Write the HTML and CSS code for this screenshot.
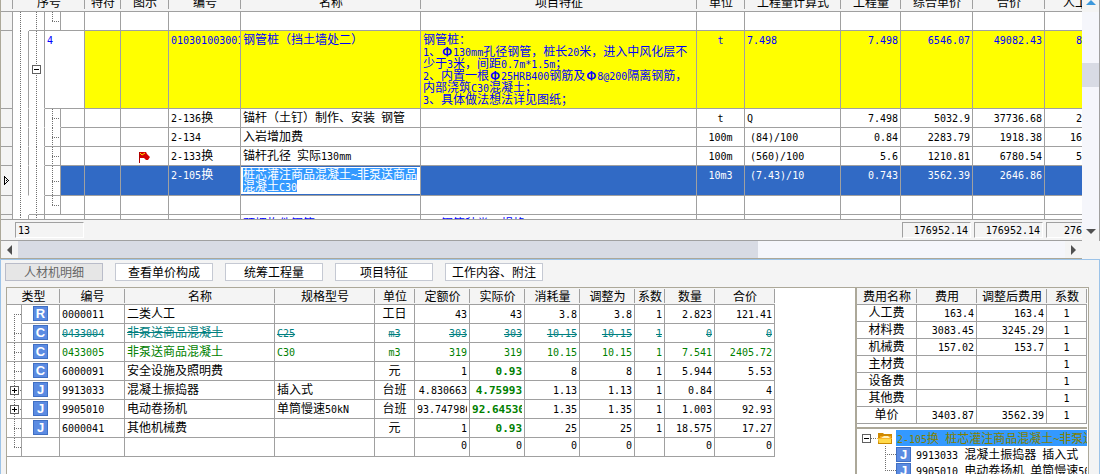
FILE: index.html
```html
<!DOCTYPE html>
<html lang="zh-CN">
<head>
<meta charset="utf-8">
<title>清单计价</title>
<link rel="stylesheet" href="styles.css">
</head>
<body>
<main class="app">
<section class="top">
  <div class="top-main">
    <div class="viewport">
      <table class="grid bill">
        <colgroup><col class="w12"><col class="w16"><col class="w16"><col class="w16"><col class="w24"><col class="w36"><col class="w48"><col class="w72"><col class="w180"><col><col class="w48"><col class="w96"><col class="w60"><col class="w72"><col class="w72"><col class="w38"></colgroup>
        <thead>
          <tr><th></th><th colspan="4">序号</th><th>特符</th><th>图示</th><th>编号</th><th>名称</th><th>项目特征</th><th>单位</th><th>工程量计算式</th><th>工程量</th><th>综合单价</th><th>合价</th><th class="cut-head">人工</th></tr>
        </thead>
        <tbody>
          <tr><td class="gut"></td><td class="t line open nor"></td><td class="t line"></td><td class="t end"></td><td></td><td></td><td></td><td></td><td></td><td></td><td></td><td></td><td></td><td></td><td></td><td></td></tr>
          <tr class="item"><td class="gut"></td><td class="t line open"></td><td class="t line open"><button class="box mid" aria-label="折叠"></button></td><td class="white n" colspan="2">4</td><td></td><td></td><td class="n">010301003001</td><td>钢管桩（挡土墙处二）</td>
            <td>钢管桩：<br><span class="n">1</span>、<span class="phi">Φ</span><span class="n">130mm</span>孔径钢管，桩长<span class="n">20</span>米，进入中风化层不<br>少于<span class="n">3</span>米，间距<span class="n">0.7m*1.5m</span>；<br><span class="n">2</span>、内置一根<span class="phi">Φ</span><span class="n">25HRB400</span>钢筋及<span class="phi">Φ</span><span class="n">8@200</span>隔离钢筋，<br>内部浇筑<span class="n">C30</span>混凝土；<br><span class="n">3</span>、具体做法想法详见图纸；</td>
            <td class="n c">t</td><td class="n">7.498</td><td class="n r">7.498</td><td class="n r">6546.07</td><td class="n r">49082.43</td><td class="n r cut">8</td></tr>
          <tr><td class="gut"></td><td class="t line open"></td><td class="t line open"></td><td class="t branch open"></td><td></td><td></td><td></td><td><span class="n">2-136</span>换</td><td>锚杆（土钉）制作、安装<span class="n"> </span>钢管</td><td></td><td class="n c">t</td><td class="n">Q</td><td class="n r">7.498</td><td class="n r">5032.9</td><td class="n r">37736.68</td><td class="n r cut">2</td></tr>
          <tr><td class="gut"></td><td class="t line open"></td><td class="t line open"></td><td class="t branch"></td><td></td><td></td><td></td><td class="n">2-134</td><td>入岩增加费</td><td></td><td class="n c">100m</td><td class="n expr">(84)/100</td><td class="n r">0.84</td><td class="n r">2283.79</td><td class="n r">1918.38</td><td class="n r cut">16</td></tr>
          <tr><td class="gut"></td><td class="t line open"></td><td class="t line open"></td><td class="t branch"></td><td></td><td></td>
            <td class="c mark-cell"><svg class="flag" viewBox="0 0 12 11" role="img" aria-label="标记"><path d="M0 0h1v11H0z" fill="#b00000"/><path d="M1 0h6l1 2 3 3-2 3H7L5 6H1z" fill="#d40000"/><path d="M1 1l2 2 3-2" stroke="#ffd800" fill="none"/></svg></td>
            <td><span class="n">2-133</span>换</td><td>锚杆孔径<span class="n"> </span>实际<span class="n">130mm</span></td><td></td><td class="n c">100m</td><td class="n expr">(560)/100</td><td class="n r">5.6</td><td class="n r">1210.81</td><td class="n r">6780.54</td><td class="n r cut">5</td></tr>
          <tr class="sel"><td class="gut"><svg class="cursor" viewBox="0 0 6 9" aria-hidden="true"><path d="M1 0h1v9H1zM2 1h1v1H2zM3 2h1v1H3zM4 3h1v1H4zM5 4h1v1H5zM4 5h1v1H4zM3 6h1v1H3zM2 7h1v1H2zM3 4h1v1H3z"/></svg></td><td class="t line open"></td><td class="t line open"></td><td class="t branch"></td><td></td><td></td><td></td><td><span class="n">2-105</span>换</td>
            <td class="editing"><div class="editor" contenteditable="true" role="textbox" aria-label="名称"><mark>桩芯灌注商品混凝土<span class="n">~</span>非泵送商品</mark><mark>混凝土<span class="n">C30</span></mark></div></td>
            <td></td><td class="n c">10m3</td><td class="n expr">(7.43)/10</td><td class="n r">0.743</td><td class="n r">3562.39</td><td class="n r">2646.86</td><td></td></tr>
          <tr><td class="gut"></td><td class="t line open nor"></td><td class="t line"></td><td class="t end"></td><td></td><td></td><td></td><td></td><td></td><td></td><td></td><td></td><td></td><td></td><td></td><td></td></tr>
          <tr class="next"><td class="gut"></td><td class="t line open"></td><td class="t line open"></td><td colspan="2"></td><td></td><td></td><td></td><td>预埋构件钢筋</td><td><span class="n">1</span>、钢筋种类、规格</td><td></td><td></td><td></td><td></td><td></td><td></td></tr>
        </tbody>
      </table>
    </div>
    <div class="totals"><output class="sum count">13</output><output class="sum">176952.14</output><output class="sum">176952.14</output><output class="sum last">276</output></div>
    <div class="hscroll"><button class="sb" aria-label="向左"><i class="left"></i></button><div class="hthumb"></div><button class="sb end-btn" aria-label="向右"><i class="right"></i></button></div>
  </div>
  <div class="vscroll"><button class="sb" aria-label="向上"><i class="up"></i></button><div class="vthumb"></div><button class="sb down-btn" aria-label="向下"><i class="down"></i></button></div>
</section>

<section class="bottom">
  <nav class="tabs"><button disabled>人材机明细</button><button>查看单价构成</button><button>统筹工程量</button><button>项目特征</button><button>工作内容、附注</button></nav>
  <div class="panes">
    <div class="pane detail">
      <table class="grid res">
        <colgroup><col class="w15"><col class="w37"><col class="w65"><col class="w150"><col class="w100"><col class="w40"><col class="w55"><col class="w55"><col class="w55"><col class="w55"><col class="w30"><col class="w50"><col class="w60"></colgroup>
        <thead><tr><th colspan="2">类型</th><th>编号</th><th>名称</th><th>规格型号</th><th>单位</th><th>定额价</th><th>实际价</th><th>消耗量</th><th>调整为</th><th>系数</th><th>数量</th><th>合价</th></tr></thead>
        <tbody>
          <tr><td class="t first open"></td><td class="kind"><span class="k">R</span></td><td class="n">0000011</td><td>二类人工</td><td></td><td class="c">工日</td><td class="n r">43</td><td class="n r">43</td><td class="n r">3.8</td><td class="n r">3.8</td><td class="n r">1</td><td class="n r">2.823</td><td class="n r">121.41</td></tr>
          <tr class="old"><td class="t branch"></td><td class="kind"><span class="k">C</span></td><td class="n">0433004</td><td>非泵送商品混凝土</td><td class="n">C25</td><td class="n c">m3</td><td class="n r">303</td><td class="n r">303</td><td class="n r">10.15</td><td class="n r">10.15</td><td class="n r">1</td><td class="n r">0</td><td class="n r">0</td></tr>
          <tr class="new"><td class="t branch"></td><td class="kind"><span class="k">C</span></td><td class="n">0433005</td><td>非泵送商品混凝土</td><td class="n">C30</td><td class="n c">m3</td><td class="n r">319</td><td class="n r">319</td><td class="n r">10.15</td><td class="n r">10.15</td><td class="n r">1</td><td class="n r">7.541</td><td class="n r">2405.72</td></tr>
          <tr><td class="t branch"></td><td class="kind"><span class="k">C</span></td><td class="n">6000091</td><td>安全设施及照明费</td><td></td><td class="c">元</td><td class="n r">1</td><td class="n r b">0.93</td><td class="n r">8</td><td class="n r">8</td><td class="n r">1</td><td class="n r">5.944</td><td class="n r">5.53</td></tr>
          <tr><td class="t branch"><button class="box mid" aria-label="展开"></button></td><td class="kind"><span class="k">J</span></td><td class="n">9913033</td><td>混凝土振捣器</td><td>插入式</td><td class="c">台班</td><td class="n r">4.830663</td><td class="n r b">4.75993</td><td class="n r">1.13</td><td class="n r">1.13</td><td class="n r">1</td><td class="n r">0.84</td><td class="n r">4</td></tr>
          <tr><td class="t branch"><button class="box mid" aria-label="展开"></button></td><td class="kind"><span class="k">J</span></td><td class="n">9905010</td><td>电动卷扬机</td><td>单筒慢速<span class="n">50kN</span></td><td class="c">台班</td><td class="n"><div class="clip">93.747986</div></td><td class="n b"><div class="clip">92.64530</div></td><td class="n r">1.35</td><td class="n r">1.35</td><td class="n r">1</td><td class="n r">1.003</td><td class="n r">92.93</td></tr>
          <tr><td class="t branch"></td><td class="kind"><span class="k">J</span></td><td class="n">6000041</td><td>其他机械费</td><td></td><td class="c">元</td><td class="n r">1</td><td class="n r b">0.93</td><td class="n r">25</td><td class="n r">25</td><td class="n r">1</td><td class="n r">18.575</td><td class="n r">17.27</td></tr>
          <tr><td class="t end"></td><td></td><td></td><td></td><td></td><td></td><td class="n r">0</td><td class="n r">0</td><td class="n r">0</td><td class="n r">0</td><td></td><td class="n r">0</td><td class="n r">0</td></tr>
        </tbody>
      </table>
    </div>
    <div class="side">
      <table class="grid fee">
        <colgroup><col class="w60"><col class="w60"><col class="w70"><col></colgroup>
        <thead><tr><th>费用名称</th><th>费用</th><th>调整后费用</th><th>系数</th></tr></thead>
        <tbody>
          <tr><td class="c">人工费</td><td class="n r">163.4</td><td class="n r">163.4</td><td class="n c">1</td></tr>
          <tr><td class="c">材料费</td><td class="n r">3083.45</td><td class="n r">3245.29</td><td class="n c">1</td></tr>
          <tr><td class="c">机械费</td><td class="n r">157.02</td><td class="n r">153.7</td><td class="n c">1</td></tr>
          <tr><td class="c">主材费</td><td></td><td></td><td class="n c">1</td></tr>
          <tr><td class="c">设备费</td><td></td><td></td><td class="n c">1</td></tr>
          <tr><td class="c">其他费</td><td></td><td></td><td class="n c">1</td></tr>
          <tr><td class="c">单价</td><td class="n r">3403.87</td><td class="n r">3562.39</td><td class="n c">1</td></tr>
        </tbody>
      </table>
      <div class="tree">
        <div class="node root"><button class="box" aria-label="折叠"></button><i class="dots"></i>
          <svg class="folder" viewBox="0 0 16 13" aria-hidden="true"><path d="M1 1h5l1 1h8v10H1z" fill="#d08a00"/><path d="M3 4h11v4H3z" fill="#f7a81b"/><path d="M4 6l3-2h4l2 2z" fill="#fff2c0"/><path d="M0 6h15v1H0z" fill="#f8b830"/><path d="M1 7h13v4H2z" fill="#ffd94a"/><path d="M2 11h13v1H2z" fill="#c98a00"/></svg>
          <span class="label"><span class="n">2-105</span>换<span class="n"> </span>桩芯灌注商品混凝土<span class="n">~</span>非泵送商品</span></div>
        <div class="node child"><i class="elbow"></i><span class="k">J</span><span class="label"><span class="n">9913033 </span>混凝土振捣器<span class="n"> </span>插入式</span></div>
        <div class="node child"><i class="elbow"></i><span class="k">J</span><span class="label"><span class="n">9905010 </span>电动卷扬机<span class="n"> </span>单筒慢速<span class="n">50kN</span></span></div>
      </div>
    </div>
  </div>
</section>
</main>
</body>
</html>
```

FILE: styles.css
```css
:root {
  --line: #a0a0a0;
  --edge: #aca899;
  --face: #f4f4f4;
  --thumb: #d8dbe4;
  --dot: #707070;
  --vdots: repeating-linear-gradient(to bottom, var(--dot) 0 1px, transparent 1px 2px);
  --hdots: repeating-linear-gradient(to right, var(--dot) 0 1px, transparent 1px 2px);
}
* { box-sizing: border-box; }
body {
  margin: 0;
  height: 100vh;
  overflow: hidden;
  background: var(--face);
  color: #000;
  font-family: "Noto Sans CJK SC", sans-serif;
  font-size: 12px;
  line-height: 12px;
}
button { padding: 0; border: 0; background: none; font: inherit; color: inherit; }
.app { display: flex; flex-direction: column; height: 100%; }

/* upper grid */
.top { display: flex; flex: none; border-left: 1px solid var(--edge); }
.top-main { flex: 1; min-width: 0; border-bottom: 1px solid var(--edge); }
.viewport { height: 220px; overflow: hidden; border-bottom: 1px solid var(--line); }
.grid { border-collapse: separate; border-spacing: 0; table-layout: fixed; background: #fff; }
.bill { width: 100%; margin-top: -8px; }
.w12 { width: 12px; } .w15 { width: 15px; } .w16 { width: 16px; } .w24 { width: 24px; }
.w30 { width: 30px; } .w36 { width: 36px; } .w37 { width: 38px; } .w38 { width: 37px; }
.w40 { width: 40px; } .w48 { width: 48px; } .w50 { width: 50px; } .w55 { width: 55px; }
.w60 { width: 60px; } .w65 { width: 65px; } .w70 { width: 70px; } .w72 { width: 72px; }
.w96 { width: 96px; } .w100 { width: 100px; } .w150 { width: 150px; } .w180 { width: 180px; }

th {
  height: 20px;
  padding: 0;
  overflow: hidden;
  white-space: nowrap;
  font-weight: 400;
  color: #000;
  background:
    linear-gradient(var(--line), var(--line)) right center / 1px 14px no-repeat,
    var(--face);
  border-bottom: 1px solid var(--line);
}
td {
  height: 19px;
  padding: 2px 2px 0;
  overflow: hidden;
  white-space: nowrap;
  vertical-align: baseline;
  border-right: 1px solid var(--line);
  border-bottom: 1px solid var(--line);
}
.cut-head { text-align: left; padding-left: 18px; }
.cut { padding-right: 0; }
.n { font-family: "DejaVu Sans Mono", "Noto Sans CJK SC", monospace; font-size: 10px; }
span.n { line-height: 1px; white-space: pre; }
.c { text-align: center; }
.r { text-align: right; }
.b { font-weight: 700; font-size: 11px; color: #008000; }
.phi { display: inline-block; width: 12px; text-align: center; font-weight: 700; }
.expr { padding-left: 5px; }
.bill td:last-child, .bill th:last-child { border-right: 0; }
td.gut { background: var(--face); }

/* tree guides */
.t { padding: 0; position: relative; vertical-align: top; }
.t.open { border-bottom-color: transparent; }
.t.nor { border-right-color: transparent; }
.t.line { background: var(--vdots) 7px 0 / 1px 100% no-repeat; }
.t.branch { background: var(--vdots) 7px 0 / 1px 100% no-repeat, var(--hdots) 7px 50% / 8px 1px no-repeat; }
.t.end { background: var(--vdots) 7px 0 / 1px 50% no-repeat, var(--hdots) 7px 50% / 8px 1px no-repeat; }
.t.first { background: var(--vdots) 7px 100% / 1px 50% no-repeat, var(--hdots) 7px 50% / 8px 1px no-repeat; }
.bill .t { background-origin: border-box; }
.box {
  display: block;
  flex: none;
  width: 9px;
  height: 9px;
  border: 1px solid #606060;
  background: linear-gradient(#000, #000) center / 5px 1px no-repeat, #fff;
}
.box[aria-label="展开"] {
  background: linear-gradient(#000, #000) center / 5px 1px no-repeat, linear-gradient(#000, #000) center / 1px 5px no-repeat, #fff;
}
.mid { position: absolute; inset: 0; margin: auto; }

.item { color: #00f; }
.item td { height: 78px; background-color: #ff0; }
.item td.gut { background: var(--face); }
.item td.t, .item td.white { background-color: #fff; }
.next { color: #00f; }
.mark-cell { vertical-align: middle; }
.flag { width: 12px; height: 11px; display: block; margin: 0 auto; }
.sel { color: #fff; }
.sel td { height: 30px; background-color: #316ac5; }
.sel td.gut { background: var(--face); vertical-align: middle; padding: 0 2px; }
.sel td.t { background-color: #fff; }
.cursor { display: block; width: 6px; height: 9px; }
td.editing { padding: 1px 0; vertical-align: top; }
.editor { height: 27px; padding: 1px 2px 0; background: #fff; outline: 0; color: #fff; }
mark { display: block; width: max-content; height: 12px; background: #39f; color: #fff; }

/* totals row */
.totals { display: flex; gap: 3px; height: 21px; padding: 2px 0 2px 14px; border-bottom: 1px solid var(--line); background: var(--face); }
.sum {
  width: 69px;
  padding: 2px 2px 0;
  text-align: right;
  font: 10px/12px "DejaVu Sans Mono", monospace;
  border: 1px solid #fff;
  border-top-color: var(--line);
  border-left-color: var(--line);
}
.count { width: 69px; margin-right: auto; text-align: left; }
.sum.last { width: 36px; padding-right: 0; border-right: 0; }

/* scroll bars */
.hscroll { display: flex; height: 17px; background: #f5f6fb; }
.hthumb { width: 68.5%; background: var(--thumb); }
.sb { display: flex; align-items: center; justify-content: center; width: 17px; height: 17px; flex: none; background: var(--face); }
.end-btn { margin-left: auto; }
.vscroll { display: flex; flex-direction: column; align-items: center; width: 18px; margin-bottom: 18px; background: #f5f6fb; border-right: 1px solid var(--line); }
.vscroll .sb { height: 12px; align-items: flex-start; }
.vthumb { width: 100%; height: 24px; margin-top: 51px; background: var(--thumb); }
.down-btn { margin-top: auto; }
.sb i { border: 5px solid transparent; }
.sb .left { border-right-color: #505050; border-left-width: 0; }
.sb .right { border-left-color: #505050; border-right-width: 0; }
.sb .up { border-bottom-color: #3d98dc; border-top-width: 0; }
.sb .down { border-top-color: #505050; border-bottom-width: 0; }

/* lower area */
.bottom {
  flex: 1;
  min-height: 0;
  display: flex;
  flex-direction: column;
  border: 1px solid #9cc3e8;
  border-bottom: 0;
  padding: 3px 10px 0 4px;
}
.tabs { display: flex; gap: 12px; flex: none; }
.tabs button { width: 98px; height: 18px; background: #fff; border: 1px solid #c5c9d3; white-space: nowrap; }
.tabs button:disabled { background: #e6e6e6; color: #666; border-color: #b9bcc9; }
.panes { display: flex; flex: 1; min-height: 0; margin: 6px 0 0 1px; border: 1px solid var(--edge); border-bottom: 0; background: #fff; }
.pane { flex: 1; min-width: 0; overflow: hidden; }
.panes th { height: 17px; }
.res { width: 768px; }
.panes .t { padding: 0; }
td.kind { padding: 1px 0 0 11px; vertical-align: top; }
.k {
  display: block;
  flex: none;
  width: 15px;
  height: 15px;
  border: 1px solid #3f6fc4;
  background: #5b8be2;
  color: #fff;
  font: 700 13px/13px "Liberation Sans", sans-serif;
  text-align: center;
}
.old { color: #008080; }
.old td:not(.kind) { text-decoration: line-through; }
.new { color: #008000; }
.clip { overflow: hidden; }

.side { width: 233px; flex: none; display: flex; flex-direction: column; border-left: 2px solid var(--edge); padding-right: 1px; overflow: hidden; }
.fee { width: 100%; flex: none; }
.panes .fee td { height: 17px; padding-top: 1px; }
.tree { flex: 1; margin-top: 3px; padding-top: 1px; border-top: 2px solid var(--edge); overflow: hidden; }
.node { display: flex; align-items: center; height: 16px; white-space: nowrap; }
.root { padding-left: 5px; }
.dots { width: 6px; height: 1px; background: var(--hdots); }
.folder { width: 16px; height: 13px; flex: none; margin-right: 3px; }
.root .label { flex: 1; min-width: 0; overflow: hidden; padding: 2px 1px; background: #39f; color: #808000; }
.child { padding-left: 28px; }
.child .label { padding-left: 5px; }
.elbow { width: 11px; height: 16px; flex: none; background: var(--vdots) 0 0 / 1px 100% no-repeat, var(--hdots) 0 50% / 11px 1px no-repeat; }
.child:last-child .elbow { background-size: 1px 50%, 11px 1px; }
```
